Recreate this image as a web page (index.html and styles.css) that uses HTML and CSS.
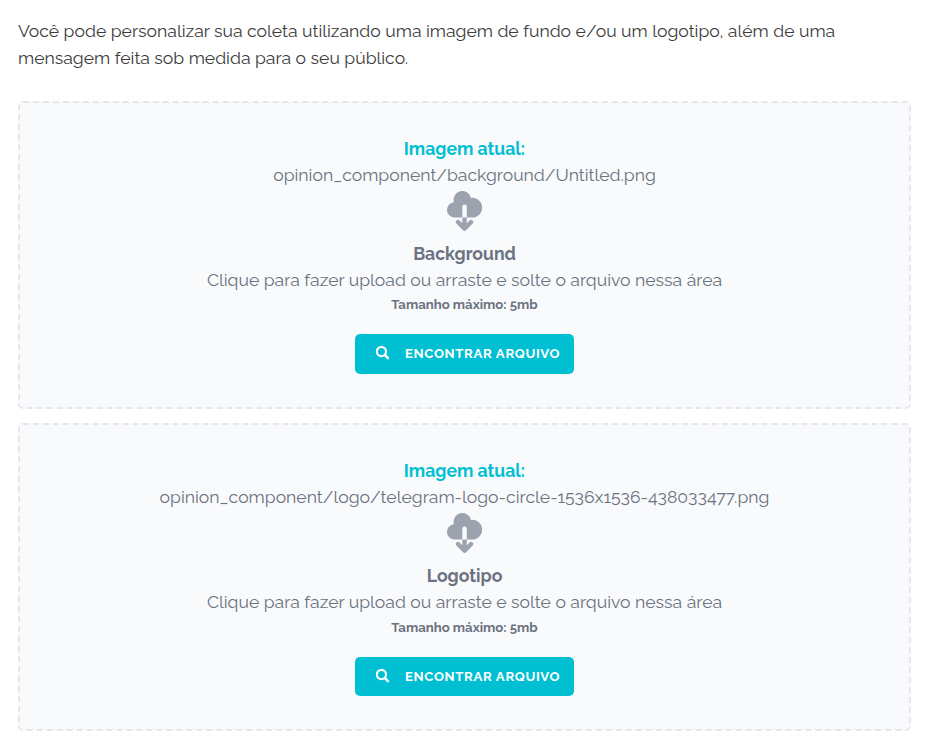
FILE: index.html
```html
<!DOCTYPE html>
<html lang="pt-BR">
<head>
<meta charset="utf-8">
<title>Personalizar coleta</title>
<link rel="stylesheet" href="styles.css">
</head>
<body>
<main class="page">
  <p class="intro">Você pode personalizar sua coleta utilizando uma imagem de fundo e/ou um logotipo, além de uma<br>mensagem feita sob medida para o seu público.</p>

  <section class="dropzone">
    <strong class="current">Imagem atual:</strong>
    <span>opinion_component/background/Untitled.png</span>
    <svg class="cloud" viewBox="-0.25 0 20 20" fill="currentColor" aria-hidden="true"><path fill-rule="evenodd" d="M2 9.5A3.5 3.5 0 005.5 13H9v2.586l-1.293-1.293a1 1 0 00-1.414 1.414l3 3a1 1 0 001.414 0l3-3a1 1 0 00-1.414-1.414L11 15.586V13h2.5a4.5 4.5 0 10-.616-8.958 4.002 4.002 0 10-7.753 1.977A3.5 3.5 0 002 9.5zm9 3.5H9V8a1 1 0 012 0v5z" clip-rule="evenodd"/></svg>
    <strong class="name">Background</strong>
    <span>Clique para fazer upload ou arraste e solte o arquivo nessa área</span>
    <span class="limit">Tamanho máximo: 5mb</span>
    <button class="browse" type="button">
      <svg class="search" viewBox="0.5 0 14 14" fill="none" stroke="currentColor" stroke-width="2.1" aria-hidden="true"><circle cx="5.9" cy="5.6" r="4.6"/><path d="M9 8.7l4.1 4.1" stroke-width="2.5"/></svg>
      <span>ENCONTRAR ARQUIVO</span>
    </button>
  </section>

  <section class="dropzone">
    <strong class="current">Imagem atual:</strong>
    <span>opinion_component/logo/telegram-logo-circle-1536x1536-438033477.png</span>
    <svg class="cloud" viewBox="-0.25 0 20 20" fill="currentColor" aria-hidden="true"><path fill-rule="evenodd" d="M2 9.5A3.5 3.5 0 005.5 13H9v2.586l-1.293-1.293a1 1 0 00-1.414 1.414l3 3a1 1 0 001.414 0l3-3a1 1 0 00-1.414-1.414L11 15.586V13h2.5a4.5 4.5 0 10-.616-8.958 4.002 4.002 0 10-7.753 1.977A3.5 3.5 0 002 9.5zm9 3.5H9V8a1 1 0 012 0v5z" clip-rule="evenodd"/></svg>
    <strong class="name">Logotipo</strong>
    <span>Clique para fazer upload ou arraste e solte o arquivo nessa área</span>
    <span class="limit">Tamanho máximo: 5mb</span>
    <button class="browse" type="button">
      <svg class="search" viewBox="0.5 0 14 14" fill="none" stroke="currentColor" stroke-width="2.1" aria-hidden="true"><circle cx="5.9" cy="5.6" r="4.6"/><path d="M9 8.7l4.1 4.1" stroke-width="2.5"/></svg>
      <span>ENCONTRAR ARQUIVO</span>
    </button>
  </section>
</main>
</body>
</html>
```
FILE: styles.css
```css
* { box-sizing: border-box; }

body {
  margin: 0;
  background: #fff;
  color: #3c3c3c;
  font: 17.6px/26.4px Raleway, Lato, sans-serif;
}

.page {
  display: flex;
  flex-direction: column;
  gap: 14.4px;
  padding: 17.4px 15px 8px 18px;
}

.intro {
  margin: 0 0 15.2px;
  line-height: 27px;
  white-space: nowrap;
}

.dropzone {
  display: flex;
  flex-direction: column;
  align-items: center;
  height: 308px;
  padding-top: 32.7px;
  border: 2px dashed #e5e7eb;
  border-radius: 5px;
  background: #f9fafc;
  color: #6b7280;
  white-space: nowrap;
}

.current { color: #00bfd3; }

.cloud {
  width: 44px;
  height: 44px;
  margin: 0.3px 1px 8px 0;
  color: #9ca3af;
}

.name { margin-bottom: -0.3px; }

.limit {
  font-size: 13.2px;
  font-weight: 700;
  line-height: 23.2px;
}

.browse {
  display: flex;
  align-items: center;
  gap: 15.5px;
  width: 219px;
  height: 39.6px;
  margin-top: 17.7px;
  padding: 0.6px 0 0 20.5px;
  border: 0;
  border-radius: 5px;
  background: #00bfd3;
  color: #fff;
  font: 700 13.2px/20px Raleway, Lato, sans-serif;
  letter-spacing: 0.66px;
}

.search { width: 14px; height: 14px; margin-bottom: 1.6px; }
```
